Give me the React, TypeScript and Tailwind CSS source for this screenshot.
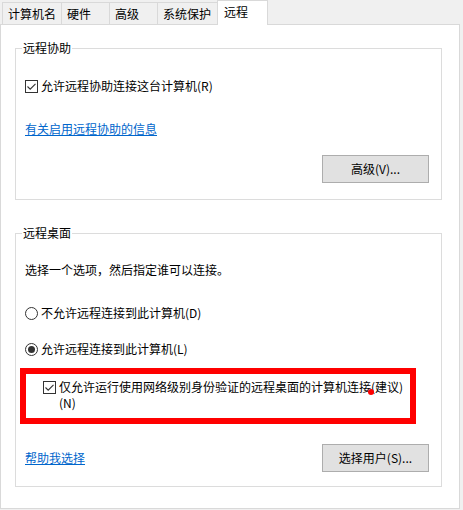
import React from "react";

const FONT = { fontFamily: '"Noto Sans CJK SC", "Noto Sans", sans-serif' };

function CheckBox() {
  return (
    <span className="flex h-[13px] w-[13px] shrink-0 items-center justify-center border border-[#333333] bg-white">
      <svg width="11" height="11" viewBox="0 0 11 11">
        <path d="M1.5 5.5 L4.2 8.2 L9.5 2.8" fill="none" stroke="#333333" strokeWidth="1.1" />
      </svg>
    </span>
  );
}

function Radio({ checked }: { checked?: boolean }) {
  return (
    <span className="flex h-[13px] w-[13px] shrink-0 items-center justify-center rounded-full border border-[#333333] bg-white">
      {checked && <span className="h-[7px] w-[7px] rounded-full bg-[#333333]" />}
    </span>
  );
}

function Btn({ children }: { children: React.ReactNode }) {
  return (
    <div className="flex h-[28px] w-[107px] items-center justify-center border border-[#adadad] bg-[#e1e1e1] text-[12px] leading-[16px] text-black">
      {children}
    </div>
  );
}

export default function App() {
  const tabs = [
    { label: "计算机名", w: "w-[59px]" },
    { label: "硬件", w: "w-[48px]" },
    { label: "高级", w: "w-[48px]" },
    { label: "系统保护", w: "w-[60px]" },
  ];
  return (
    <div className="h-[510px] w-[463px] overflow-hidden bg-[#f0f0f0] text-[12px] leading-[16px] text-black" style={FONT}>
      <div className="flex h-[24px] items-end pl-[2px]">
        {tabs.map((t) => (
          <div
            key={t.label}
            className={`flex h-[22px] ${t.w} items-center border-l border-t border-[#d9d9d9] bg-[#f0f0f0] pl-[5px]`}
          >
            {t.label}
          </div>
        ))}
        <div className="relative z-10 -mb-px flex h-[25px] w-[51px] items-center border-x border-t border-[#d9d9d9] bg-white pl-[6px] pb-[2px]">
          远程
        </div>
      </div>
      <div className="h-[485px] w-[460px] border border-[#d9d9d9] bg-white pt-[15px]">
        <fieldset className="ml-[14px] h-[160px] w-[427px] border border-[#dcdcdc] pl-[6px]">
          <legend className="px-[1px] leading-[16px]">远程协助</legend>
          <div className="mt-[22px] flex h-[16px] items-center pl-[3px]">
            <CheckBox />
            <span className="ml-[3px]">允许远程协助连接这台计算机(R)</span>
          </div>
          <div className="mt-[27px] h-[16px] pl-[3px]">
            <span className="text-[#0066cc] underline">有关启用远程协助的信息</span>
          </div>
          <div className="mt-[18px] flex justify-end pr-[12px]">
            <Btn>高级(V)...</Btn>
          </div>
        </fieldset>
        <fieldset className="ml-[14px] mt-[25px] h-[262px] w-[427px] border border-[#dcdcdc] pl-[6px]">
          <legend className="px-[1px] leading-[16px]">远程桌面</legend>
          <div className="mt-[21px] h-[16px] pl-[3px]">选择一个选项，然后指定谁可以连接。</div>
          <div className="mt-[27px] flex h-[16px] items-center pl-[3px]">
            <Radio />
            <span className="ml-[3px]">不允许远程连接到此计算机(D)</span>
          </div>
          <div className="mt-[20px] flex h-[16px] items-center pl-[3px]">
            <Radio checked />
            <span className="ml-[3px]">允许远程连接到此计算机(L)</span>
          </div>
          <div className="relative -ml-[2px] mt-[11px] h-[56px] w-[396px] border-[6px] border-[#ff0000] pl-[17px] pt-[5px]">
            <div className="flex items-start">
              <span className="mt-[2px]">
                <CheckBox />
              </span>
              <span className="ml-[3px]">
                仅允许运行使用网络级别身份验证的远程桌面的计算机连接(建议)
                <br />
                (N)
              </span>
            </div>
            <span className="absolute left-[342px] top-[15px] h-[6px] w-[6px] rounded-full bg-[#ff0000]" />
          </div>
          <div className="mt-[20px] flex items-center justify-between pl-[3px] pr-[12px]">
            <span className="text-[#0066cc] underline">帮助我选择</span>
            <Btn>选择用户(S)...</Btn>
          </div>
        </fieldset>
      </div>
    </div>
  );
}
